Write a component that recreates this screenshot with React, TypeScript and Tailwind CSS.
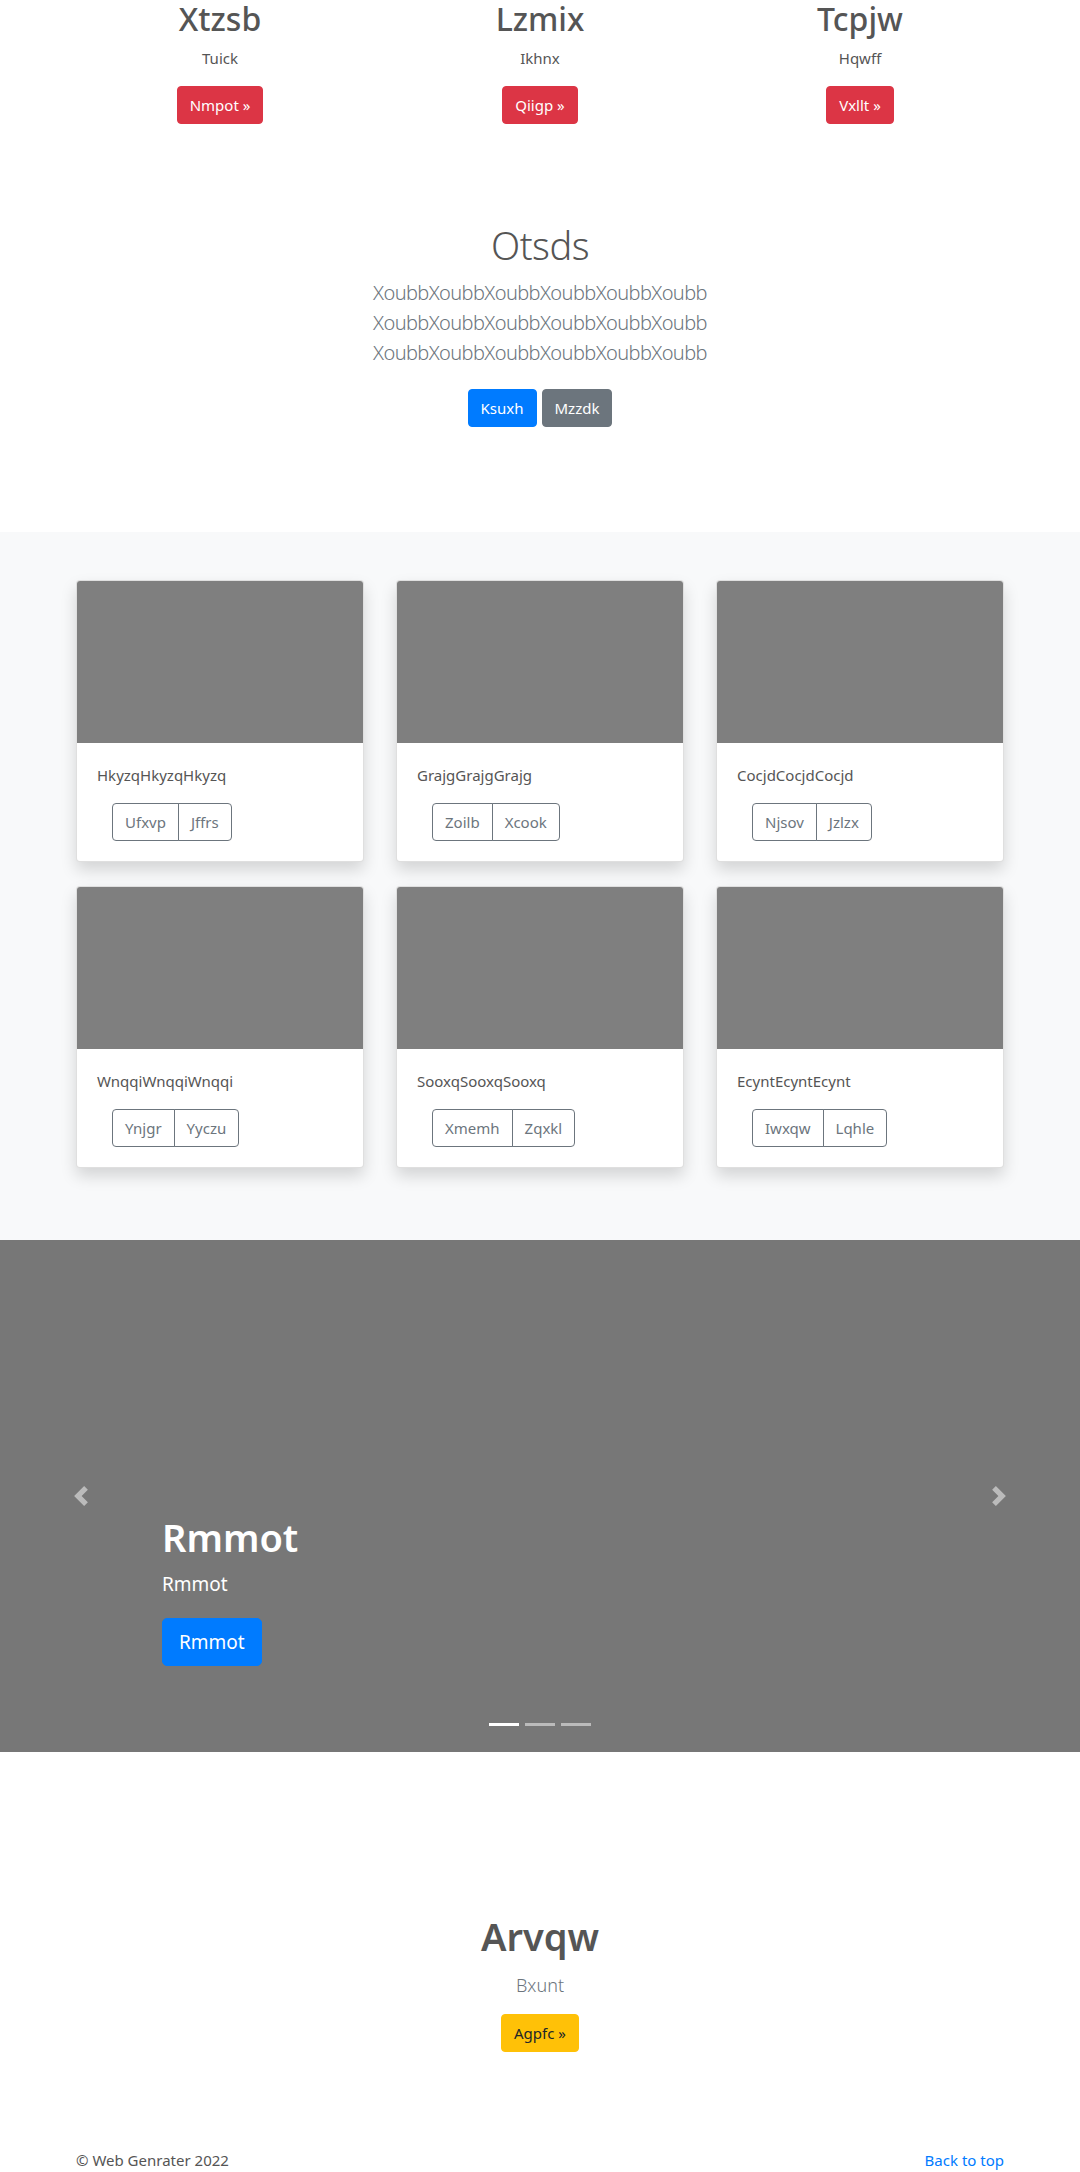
import React from "react";

const Chevron = ({ dir }: { dir: "left" | "right" }) => (
  <svg width="20" height="20" viewBox="0 0 8 8" fill="#fff" className="opacity-50">
    {dir === "left" ? (
      <path d="M5.25 0l-4 4 4 4 1.5-1.5L4.25 4l2.5-2.5L5.25 0z" />
    ) : (
      <path d="M2.75 0l-1.5 1.5L3.75 4l-2.5 2.5L2.75 8l4-4-4-4z" />
    )}
  </svg>
);

const cards = [
  { t: "HkyzqHkyzqHkyzq", a: "Ufxvp", b: "Jffrs" },
  { t: "GrajgGrajgGrajg", a: "Zoilb", b: "Xcook" },
  { t: "CocjdCocjdCocjd", a: "Njsov", b: "Jzlzx" },
  { t: "WnqqiWnqqiWnqqi", a: "Ynjgr", b: "Yyczu" },
  { t: "SooxqSooxqSooxq", a: "Xmemh", b: "Zqxkl" },
  { t: "EcyntEcyntEcynt", a: "Iwxqw", b: "Lqhle" },
];

const tops = [
  { h: "Xtzsb", p: "Tuick", b: "Nmpot »" },
  { h: "Lzmix", p: "Ikhnx", b: "Qiigp »" },
  { h: "Tcpjw", p: "Hqwff", b: "Vxllt »" },
];

export default function App() {
  return (
    <div className="bg-white font-['Segoe_UI','Noto_Sans',sans-serif] text-[#212529]">
      {/* Top columns */}
      <section className="mx-auto grid w-[960px] grid-cols-3">
        {tops.map((c) => (
          <div key={c.h} className="text-center">
            <h2 className="mb-2 text-[32px] font-medium leading-[1.2] text-[#555]">{c.h}</h2>
            <p className="mb-4 text-[15px] leading-6 text-[#555]">{c.p}</p>
            <a className="inline-block rounded-[4px] border border-[#dc3545] bg-[#dc3545] px-3 py-[6px] text-[15px] leading-6 text-white">
              {c.b}
            </a>
          </div>
        ))}
      </section>

      {/* Jumbotron */}
      <section className="pt-[99px] pb-[105px] text-center">
        <h1 className="mb-[9px] text-[38px] font-light leading-[1.2] tracking-[-0.5px] text-[#555]">Otsds</h1>
        <p className="mb-[21px] text-[20px] font-light leading-[30px] tracking-[-0.6px] text-[#6c757d]">
          XoubbXoubbXoubbXoubbXoubbXoubb
          <br />
          XoubbXoubbXoubbXoubbXoubbXoubb
          <br />
          XoubbXoubbXoubbXoubbXoubbXoubb
        </p>
        <div className="flex justify-center gap-[5px]">
          <a className="inline-block rounded-[4px] border border-[#007bff] bg-[#007bff] px-3 py-[6px] text-[15px] leading-6 text-white">Ksuxh</a>
          <a className="inline-block rounded-[4px] border border-[#6c757d] bg-[#6c757d] px-3 py-[6px] text-[15px] leading-6 text-white">Mzzdk</a>
        </div>
      </section>

      {/* Cards */}
      <section className="bg-[#f8f9fa] py-12">
        <div className="mx-auto grid w-[928px] grid-cols-3 gap-x-8 gap-y-6 pb-6">
          {cards.map((c) => (
            <div
              key={c.t}
              className="overflow-hidden rounded-[4px] border border-black/[0.125] bg-white shadow-[0_8px_16px_rgba(0,0,0,0.15)]"
            >
              <div className="h-[162px] bg-[#7f7f7f]" />
              <div className="p-5">
                <p className="mb-4 text-[15px] leading-6 text-[#555]">{c.t}</p>
                <div className="ml-[15px] inline-flex">
                  <a className="rounded-l-[4px] border border-[#6c757d] px-3 py-[6px] text-[15px] leading-6 text-[#6c757d]">{c.a}</a>
                  <a className="-ml-px rounded-r-[4px] border border-[#6c757d] px-3 py-[6px] text-[15px] leading-6 text-[#6c757d]">{c.b}</a>
                </div>
              </div>
            </div>
          ))}
        </div>
      </section>

      {/* Carousel */}
      <section className="relative h-[512px] bg-[#777]">
        <div className="absolute inset-y-0 left-0 flex w-[15%] items-center justify-center">
          <Chevron dir="left" />
        </div>
        <div className="absolute inset-y-0 right-0 flex w-[15%] items-center justify-center">
          <Chevron dir="right" />
        </div>
        <div className="absolute left-[162px] top-[275px] text-white">
          <h1 className="mb-2 text-[38px] font-semibold leading-[1.2]">Rmmot</h1>
          <p className="mb-[19px] text-[19px] leading-[30px]">Rmmot</p>
          <a className="inline-block rounded-[5px] border border-[#007bff] bg-[#007bff] px-4 py-2 text-[19px] leading-[30px] text-white">Rmmot</a>
        </div>
        <div className="absolute bottom-[26px] left-0 right-0 flex justify-center gap-[6px]">
          <span className="h-[3px] w-[30px] bg-white" />
          <span className="h-[3px] w-[30px] bg-white/50" />
          <span className="h-[3px] w-[30px] bg-white/50" />
        </div>
      </section>

      {/* Bottom */}
      <section className="pt-[162px] pb-[96px] text-center">
        <h2 className="mb-[10px] text-[38px] font-semibold leading-[1.2] text-[#555]">Arvqw</h2>
        <p className="mb-[14px] text-[18px] font-light leading-[30px] text-[#6c757d]">Bxunt</p>
        <a className="inline-block rounded-[4px] border border-[#ffc107] bg-[#ffc107] px-3 py-[6px] text-[15px] leading-6 text-[#212529]">Agpfc »</a>
      </section>

      <footer className="mx-auto flex w-[928px] justify-between pb-6 text-[15px] leading-6">
        <span className="text-[#555]">© Web Genrater 2022</span>
        <a className="text-[#007bff]">Back to top</a>
      </footer>
    </div>
  );
}
